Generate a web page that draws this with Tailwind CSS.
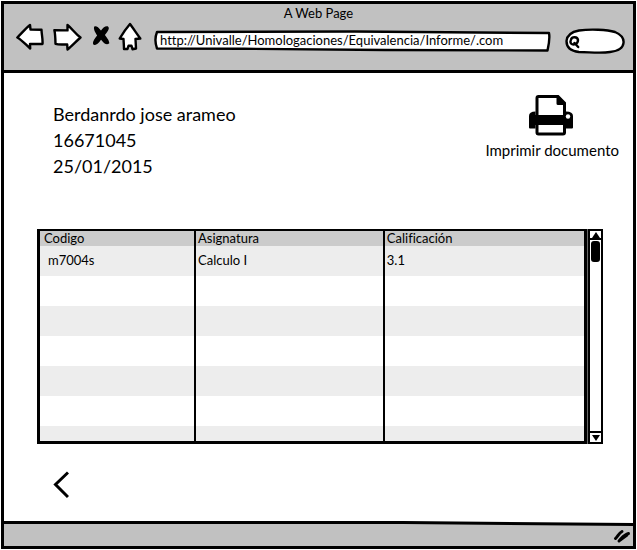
<!DOCTYPE html>
<html lang="es">
<head>
<meta charset="utf-8">
<meta name="viewport" content="width=device-width, initial-scale=1">
<title>A Web Page</title>
<script src="https://cdn.jsdelivr.net/npm/@tailwindcss/browser@4"></script>
</head>
<body class="bg-white font-['Lato','Noto_Sans',sans-serif] text-black [font-variant-ligatures:none]">
<div class="flex min-h-screen p-px">
<div class="flex min-w-0 flex-1 flex-col border-[3px] border-black">

  <header class="border-b-[3px] border-black bg-[#c1c1c1] pb-4">
    <h1 class="text-center text-[13px] leading-[18px]">A Web Page</h1>
    <div class="flex items-start pr-2 pl-3">
      <nav class="flex shrink-0 items-center" aria-label="Navegador">
        <button type="button" aria-label="Atrás"><svg class="h-[30px] w-7" viewBox="0 0 28 30" fill="#fff" stroke="#000" stroke-width="2.4" stroke-linejoin="round"><path d="M1.3 15.5 C5 12 10 6 14 3 L14.5 7.5 L25.5 7.8 C25.5 12 27 17 26.5 22 L14 22 L14.2 26.5 C10 23 6 18 1.3 15.5Z"/></svg></button>
        <button type="button" aria-label="Adelante" class="ml-[9px]"><svg class="h-[30px] w-[29px]" viewBox="0 0 29 30" fill="#fff" stroke="#000" stroke-width="2.4" stroke-linejoin="round"><path d="M1.4 8.2 L14.5 8.4 L14.5 3 C19 6.5 22 11.5 27.5 15.5 C23 19.500 19 24 14.500 27.500 L14.200 22.500 C10 22.300 6 23 2.500 21.800 C2.400 17 2.300 12 1.400 8.200Z"/></svg></button>
        <button type="button" aria-label="Detener" class="ml-[10px]"><svg class="h-[30px] w-[18px]" viewBox="0 0 18 30" stroke="#000" stroke-width="1.5" stroke-linejoin="round"><path d="M3 5 C5.500 4.500 7.500 8 9 10 C10.500 7.500 12.500 4.500 15.500 5 C17.500 6.500 13.500 11 12 13 C13.500 15.500 17 18.500 16.500 21 C14 23 11 19 9 16.500 C7 19.500 5 23 2 22 C0.500 20 4 16 6 13.500 C4.500 11 1.500 7.500 3 5Z"/></svg></button>
        <button type="button" aria-label="Inicio" class="ml-2"><svg class="h-[30px] w-6" viewBox="0 0 24 30" fill="#fff" stroke="#000" stroke-width="2.400" stroke-linejoin="round"><path d="M12 2 C8.500 6 5 11 1.700 16.500 L5.500 17 C5.700 21 6 24 6 27 L9.500 27 L10.500 23.800 L13.500 23.800 L14.500 27.200 L18 26.500 L17.500 17 L22.300 16.500 C19 12 15 6 12 2Z"/></svg></button>
      </nav>
      <form class="mt-1.5 flex min-w-0 flex-1 items-center">
        <div class="relative ml-3 h-[22px] min-w-0 flex-1">
          <svg class="absolute inset-0 size-full" viewBox="0 0 396 22" preserveAspectRatio="none" fill="#fff" stroke="#000" stroke-width="2.400" stroke-linejoin="round" aria-hidden="true"><path d="M3 2 L200 1.500 L394 3 C395 8 394 14 392.500 20.500 L230 20 L90 18.800 L3 18.500 C1 13 1 7 3 2Z"/></svg>
          <input type="text" aria-label="Dirección" value="http://Univalle/Homologaciones/Equivalencia/Informe/.com" class="relative block h-5 w-full bg-transparent px-1.5 text-[13px] leading-5 outline-none">
        </div>
        <div class="relative ml-[14px] h-[26px] w-[60px] shrink-0">
          <svg class="absolute inset-0 size-full" viewBox="0 0 60 26" aria-hidden="true" fill="#fff" stroke="#000" stroke-width="2.400" stroke-linecap="round"><path d="M14 2.500 C25 1 42 1.500 50 4 C57 7 59 11 58.500 15 C58 20 54 23 45 24 C35 25.500 24 24 14 24 C5 23 1.500 19 1.500 13 C2 7 6 4 14 2.500Z"/><path fill="none" d="M6 11.500 C7 8.500 12.500 8.500 13 12 C13 16.500 8 17.500 6 15.500 C5 14 5.500 12.500 6 11.500Z M9.500 15 L13.200 19"/></svg>
          <input type="search" aria-label="Buscar" class="relative block h-6 w-full bg-transparent pr-3 pl-4 text-[13px] outline-none">
        </div>
      </form>
    </div>
  </header>

  <main class="flex flex-1 flex-col pr-[14px] pl-[33px]">
    <section class="flex items-start justify-between pt-5 pl-4">
      <div class="pt-2 text-[18px] leading-[26px]">
        <p>Berdanrdo jose arameo</p>
        <p>16671045</p>
        <p>25/01/2015</p>
      </div>
      <button type="button" class="flex flex-col items-center text-[15px] leading-[22px]">
        <svg class="h-[46px] w-[46px]" viewBox="0 0 46 46" aria-hidden="true"><path d="M8 22 V5 Q8 3.500 9.500 3.500 H29 L35.500 10 V22 M8 30 V39.500 Q8 41 9.500 41 H34 Q35.500 41 35.500 39.500 V30" fill="none" stroke="#000" stroke-width="3"/><path d="M27.500 2 L37 10.500 V12 H29 Q27.500 12 27.500 10.500Z"/><path d="M0 34.500 V23 Q0 18.500 6.500 18.500 V22 H37 V18.500 Q44 18.500 44 23 V34.500 Q44 35.500 43 35.500 H37 V32 H6.500 V35.500 H1 Q0 35.500 0 34.500Z"/><circle cx="39" cy="23.500" r="2.200" fill="#fff"/></svg>
        Imprimir documento
      </button>
    </section>

    <section class="mt-[50px] mr-4 flex h-[215px]">
      <div class="min-w-0 flex-1 overflow-hidden border-[3px] border-t-2 border-black">
        <table class="w-full table-fixed border-collapse text-left text-[13px]">
          <colgroup><col class="w-[28.500%]"><col class="w-[34.700%]"><col></colgroup>
          <thead class="bg-[#cbcbcb]">
            <tr class="h-[15px] leading-[15px]">
              <th class="border-r-2 border-black p-0 pl-1 font-normal">Codigo</th>
              <th class="border-r-2 border-black p-0 pl-0.5 font-normal">Asignatura</th>
              <th class="p-0 pl-0.5 font-normal">Calificación</th>
            </tr>
          </thead>
          <tbody>
            <tr class="h-[30px] bg-[#ededed]"><td class="border-r-2 border-black p-0 pl-2">m7004s</td><td class="border-r-2 border-black p-0 pl-0.5">Calculo I</td><td class="p-0 pl-0.5">3.1</td></tr>
            <tr class="h-[30px]"><td class="border-r-2 border-black"></td><td class="border-r-2 border-black"></td><td></td></tr>
            <tr class="h-[30px] bg-[#ededed]"><td class="border-r-2 border-black"></td><td class="border-r-2 border-black"></td><td></td></tr>
            <tr class="h-[30px]"><td class="border-r-2 border-black"></td><td class="border-r-2 border-black"></td><td></td></tr>
            <tr class="h-[30px] bg-[#ededed]"><td class="border-r-2 border-black"></td><td class="border-r-2 border-black"></td><td></td></tr>
            <tr class="h-[30px]"><td class="border-r-2 border-black"></td><td class="border-r-2 border-black"></td><td></td></tr>
            <tr class="h-[30px] bg-[#ededed]"><td class="border-r-2 border-black"></td><td class="border-r-2 border-black"></td><td></td></tr>
          </tbody>
        </table>
      </div>
      <div class="w-px bg-[#666]"></div>
      <div class="flex w-[15px] flex-col border-2 border-black bg-white">
        <button type="button" aria-label="Subir" class="flex h-[9px] items-center justify-center border-b-2 border-black"><svg class="h-1.5 w-2" viewBox="0 0 8 6"><path d="M4 0 L8 6 H0Z"/></svg></button>
        <div class="mx-auto mt-px h-[21px] w-[9px] rounded-[3px] bg-black"></div>
        <button type="button" aria-label="Bajar" class="mt-auto flex h-[11px] items-center justify-center border-t-2 border-black"><svg class="h-1.5 w-2" viewBox="0 0 8 6"><path d="M0 0 H8 L4 6Z"/></svg></button>
      </div>
    </section>

    <a href="#" aria-label="Volver" class="mt-[26px] ml-4 self-start"><svg class="h-[30px] w-4" viewBox="0 0 16 30" fill="none" stroke="#000" stroke-width="3"><path d="M15 2.500 L2.500 14.500 L15 27"/></svg></a>
  </main>

  <footer class="flex h-[26px] flex-col bg-[#c1c1c1]">
    <svg class="h-[6px] w-full shrink-0" viewBox="0 0 630 6" preserveAspectRatio="none" aria-hidden="true"><path fill="#fff" d="M0 0 H630 V4 L0 2Z"/><path d="M0 1 L400 1 L630 3 V6 L400 4 L0 4Z"/></svg>
    <svg class="mt-0.5 mr-0.5 h-4 w-[18px] shrink-0 self-end" viewBox="0 0 18 16" fill="none" stroke="#000" stroke-width="3" stroke-linecap="round" aria-hidden="true"><path d="M2.500 10.500 C5 8 6 5 9 3.500 M6 13 C9 10 11 6.500 15.500 5.500 M6.500 12.500 L14 7"/></svg>
  </footer>
</div>
</div>
</body>
</html>
